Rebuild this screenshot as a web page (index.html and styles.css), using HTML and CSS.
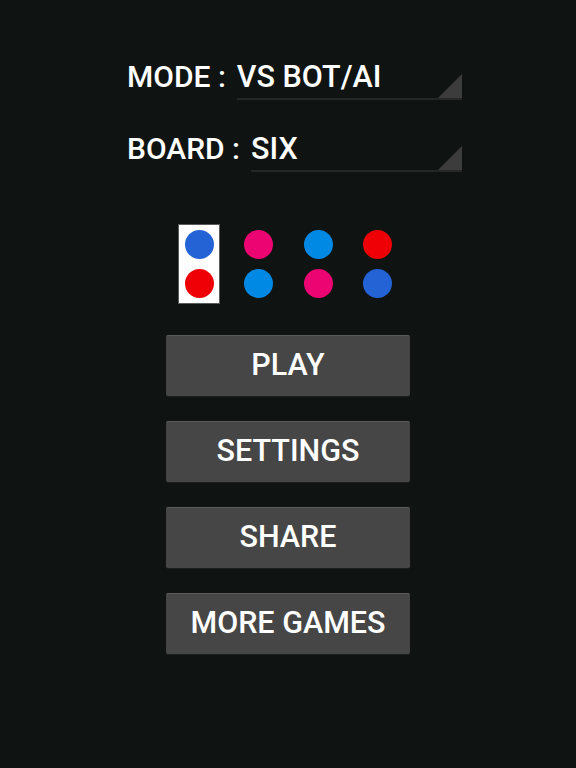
FILE: index.html
```html
<!DOCTYPE html>
<html>
<head>
<meta charset="utf-8">
<link rel="stylesheet" href="styles.css">
</head>
<body>
<main class="screen">
  <section class="form">
    <div class="row row-mode">
      <span class="label">MODE :</span>
      <div class="spinner spinner-mode"><span class="value">VS BOT/AI</span></div>
    </div>
    <div class="row row-board">
      <span class="label">BOARD :</span>
      <div class="spinner spinner-board"><span class="value">SIX</span></div>
    </div>
  </section>

  <section class="colors">
    <div class="pair selected">
      <span class="dot blue"></span>
      <span class="dot red"></span>
    </div>
    <div class="pair">
      <span class="dot pink"></span>
      <span class="dot sky"></span>
    </div>
    <div class="pair">
      <span class="dot sky"></span>
      <span class="dot pink"></span>
    </div>
    <div class="pair">
      <span class="dot red"></span>
      <span class="dot blue"></span>
    </div>
  </section>

  <nav class="menu">
    <button class="btn">PLAY</button>
    <button class="btn">SETTINGS</button>
    <button class="btn">SHARE</button>
    <button class="btn">MORE GAMES</button>
  </nav>
</main>
</body>
</html>
```
FILE: styles.css
```css
html, body {
  margin: 0;
  padding: 0;
  background: #0f1311;
}
body {
  width: 576px;
  height: 768px;
  font-family: Roboto, "Noto Sans", "Liberation Sans", sans-serif;
  color: #ffffff;
}
.screen {
  display: flex;
  flex-direction: column;
  padding-top: 58px;
}
.form {
  display: flex;
  flex-direction: column;
  gap: 30px;
  margin-left: 127px;
  width: 335px;
}
.row {
  display: flex;
  align-items: flex-end;
  height: 42px;
}
.label {
  font-size: 30px;
  font-weight: 500;
  line-height: 36px;
  white-space: pre;
  padding-bottom: 5px;
}
.spinner {
  position: relative;
  flex: 1;
  height: 42px;
  border-bottom: 2px solid #252826;
  display: flex;
  align-items: flex-end;
  box-sizing: border-box;
}
.spinner-mode { margin-left: 11px; }
.spinner-board { margin-left: 11px; }
.spinner::after {
  content: "";
  position: absolute;
  right: 0;
  bottom: 0;
  width: 0;
  height: 0;
  border-left: 24px solid transparent;
  border-bottom: 24px solid #3b3c3b;
}
.value {
  font-size: 30.5px;
  font-weight: 500;
  line-height: 36px;
  padding-bottom: 3px;
}
.colors {
  display: flex;
  margin-left: 178px;
  margin-top: 52px;
  gap: 17.5px;
}
.pair {
  width: 42px;
  height: 80px;
  box-sizing: border-box;
  display: flex;
  flex-direction: column;
  align-items: center;
  justify-content: space-between;
  padding: 6px 0;
}
.pair.selected {
  background: #ffffff;
  border: 1px solid #5a5a5a;
  padding: 5px 0;
}
.dot {
  width: 29px;
  height: 29px;
  border-radius: 50%;
}
.blue { background: #2463d6; }
.red { background: #ee0006; }
.pink { background: #ec0473; }
.sky { background: #0089e4; }
.menu {
  display: flex;
  flex-direction: column;
  align-items: flex-start;
  gap: 25px;
  margin-left: 166px;
  margin-top: 31px;
}
.btn {
  width: 244px;
  height: 61px;
  background: #454645;
  border: none;
  border-top: 1px solid #5a5b5a;
  border-radius: 2px;
  box-shadow: 0 1px 0 #1c1e1d;
  color: #ffffff;
  font-family: Roboto, "Noto Sans", "Liberation Sans", sans-serif;
  font-size: 30.5px;
  font-weight: 500;
  padding: 0 0 4px 0;
}
```
